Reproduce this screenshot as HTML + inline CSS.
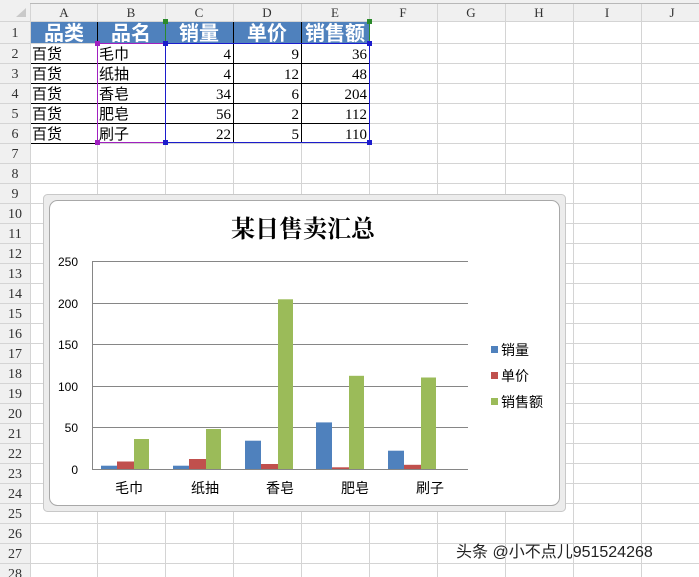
<!DOCTYPE html>
<html><head><meta charset="utf-8"><style>
body{margin:0;width:699px;height:577px;overflow:hidden;background:#fff;font-family:"Liberation Sans","Noto Sans CJK SC",sans-serif;}
svg{position:absolute;left:0;top:0}
</style></head><body>
<svg width="699" height="577" xmlns="http://www.w3.org/2000/svg" font-family="'Liberation Serif','Noto Serif CJK SC','Noto Sans CJK SC',serif">
<rect x="0" y="0" width="699" height="577" fill="#fff"/>
<rect x="0" y="0" width="699" height="21" fill="#f0f0f0"/>
<line x1="0" y1="3.5" x2="699" y2="3.5" stroke="#b8b8b8"/>
<rect x="0" y="0" width="30" height="577" fill="#f0f0f0"/>
<polygon points="16,17 26,17 26,8" fill="#c9c9c9"/>
<g stroke="#d4d4d4" stroke-width="1">
<line x1="0" y1="21.5" x2="699" y2="21.5"/>
<line x1="0" y1="43.5" x2="699" y2="43.5"/>
<line x1="0" y1="63.5" x2="699" y2="63.5"/><line x1="0" y1="83.5" x2="699" y2="83.5"/>
<line x1="0" y1="103.5" x2="699" y2="103.5"/><line x1="0" y1="123.5" x2="699" y2="123.5"/>
<line x1="0" y1="143.5" x2="699" y2="143.5"/><line x1="0" y1="163.5" x2="699" y2="163.5"/>
<line x1="0" y1="183.5" x2="699" y2="183.5"/><line x1="0" y1="203.5" x2="699" y2="203.5"/>
<line x1="0" y1="223.5" x2="699" y2="223.5"/><line x1="0" y1="243.5" x2="699" y2="243.5"/>
<line x1="0" y1="263.5" x2="699" y2="263.5"/><line x1="0" y1="283.5" x2="699" y2="283.5"/>
<line x1="0" y1="303.5" x2="699" y2="303.5"/><line x1="0" y1="323.5" x2="699" y2="323.5"/>
<line x1="0" y1="343.5" x2="699" y2="343.5"/><line x1="0" y1="363.5" x2="699" y2="363.5"/>
<line x1="0" y1="383.5" x2="699" y2="383.5"/><line x1="0" y1="403.5" x2="699" y2="403.5"/>
<line x1="0" y1="423.5" x2="699" y2="423.5"/><line x1="0" y1="443.5" x2="699" y2="443.5"/>
<line x1="0" y1="463.5" x2="699" y2="463.5"/><line x1="0" y1="483.5" x2="699" y2="483.5"/>
<line x1="0" y1="503.5" x2="699" y2="503.5"/><line x1="0" y1="523.5" x2="699" y2="523.5"/>
<line x1="0" y1="543.5" x2="699" y2="543.5"/><line x1="0" y1="563.5" x2="699" y2="563.5"/>
<line x1="30.5" y1="4" x2="30.5" y2="577"/><line x1="97.5" y1="4" x2="97.5" y2="577"/>
<line x1="165.5" y1="4" x2="165.5" y2="577"/><line x1="233.5" y1="4" x2="233.5" y2="577"/>
<line x1="301.5" y1="4" x2="301.5" y2="577"/><line x1="369.5" y1="4" x2="369.5" y2="577"/>
<line x1="437.5" y1="4" x2="437.5" y2="577"/><line x1="505.5" y1="4" x2="505.5" y2="577"/>
<line x1="573.5" y1="4" x2="573.5" y2="577"/><line x1="641.5" y1="4" x2="641.5" y2="577"/>
</g>
<g font-size="13" fill="#333" text-anchor="middle">
<text x="64" y="17">A</text><text x="131" y="17">B</text><text x="199" y="17">C</text><text x="267" y="17">D</text><text x="335" y="17">E</text><text x="403" y="17">F</text><text x="471" y="17">G</text><text x="539" y="17">H</text><text x="607" y="17">I</text><text x="672" y="17">J</text>
</g>
<g font-size="14" fill="#333" text-anchor="middle">
<text x="15" y="37">1</text><text x="15" y="58">2</text><text x="15" y="78">3</text><text x="15" y="98">4</text><text x="15" y="118">5</text><text x="15" y="138">6</text><text x="15" y="158">7</text><text x="15" y="178">8</text><text x="15" y="198">9</text><text x="15" y="218">10</text><text x="15" y="238">11</text><text x="15" y="258">12</text><text x="15" y="278">13</text><text x="15" y="298">14</text><text x="15" y="318">15</text><text x="15" y="338">16</text><text x="15" y="358">17</text><text x="15" y="378">18</text><text x="15" y="398">19</text><text x="15" y="418">20</text><text x="15" y="438">21</text><text x="15" y="458">22</text><text x="15" y="478">23</text><text x="15" y="498">24</text><text x="15" y="518">25</text><text x="15" y="538">26</text><text x="15" y="558">27</text><text x="15" y="578">28</text>
</g>
<rect x="31" y="22" width="338" height="21" fill="#4f81bd"/>
<g stroke="#000" stroke-width="1">
<line x1="97.5" y1="22" x2="97.5" y2="143"/><line x1="233.5" y1="22" x2="233.5" y2="143"/><line x1="301.5" y1="22" x2="301.5" y2="143"/>
<line x1="31" y1="63.5" x2="369" y2="63.5"/><line x1="31" y1="83.5" x2="369" y2="83.5"/><line x1="31" y1="103.5" x2="369" y2="103.5"/><line x1="31" y1="123.5" x2="369" y2="123.5"/><line x1="31" y1="143.5" x2="97" y2="143.5"/>
</g>
<g font-family="'Noto Sans CJK SC',sans-serif" font-size="20" font-weight="bold" fill="#fff" text-anchor="middle">
<text x="64" y="40">品类</text><text x="131" y="40">品名</text><text x="199" y="40">销量</text><text x="267" y="40">单价</text><text x="335" y="40">销售额</text>
</g>
<line x1="165.5" y1="22" x2="165.5" y2="43" stroke="#2b8a2b"/><line x1="369.5" y1="22" x2="369.5" y2="43" stroke="#2b8a2b"/>
<rect x="97.5" y="43.5" width="68" height="99" fill="none" stroke="#a020c0"/>
<rect x="165.5" y="43.5" width="204" height="99" fill="none" stroke="#1c1ccc"/>
<g fill="#1c1ccc"><rect x="163" y="41" width="5" height="5"/><rect x="367" y="41" width="5" height="5"/><rect x="163" y="140" width="5" height="5"/><rect x="367" y="140" width="5" height="5"/></g>
<g fill="#a020c0"><rect x="95" y="41" width="5" height="5"/><rect x="95" y="140" width="5" height="5"/></g>
<g fill="#2b8a2b"><rect x="163" y="19" width="5" height="5"/><rect x="367" y="19" width="5" height="5"/></g>
<g font-family="'Noto Sans CJK SC',sans-serif" font-size="15" fill="#000">
<text x="32" y="59">百货</text><text x="32" y="79">百货</text><text x="32" y="99">百货</text><text x="32" y="119">百货</text><text x="32" y="139">百货</text>
<text x="99" y="59">毛巾</text><text x="99" y="79">纸抽</text><text x="99" y="99">香皂</text><text x="99" y="119">肥皂</text><text x="99" y="139">刷子</text>
</g>
<g font-size="15" fill="#000" text-anchor="end">
<text x="231" y="59">4</text><text x="231" y="79">4</text><text x="231" y="99">34</text><text x="231" y="119">56</text><text x="231" y="139">22</text>
<text x="299" y="59">9</text><text x="299" y="79">12</text><text x="299" y="99">6</text><text x="299" y="119">2</text><text x="299" y="139">5</text>
<text x="367" y="59">36</text><text x="367" y="79">48</text><text x="367" y="99">204</text><text x="367" y="119">112</text><text x="367" y="139">110</text>
</g>
<rect x="43.5" y="194.5" width="522" height="317" rx="4" fill="#ececec" stroke="#c8c8c8"/>
<rect x="49.5" y="200.5" width="510" height="305" rx="8" fill="#fff" stroke="#a8a8a8"/>
<text x="303" y="237" text-anchor="middle" font-size="24" font-weight="bold" fill="#000">某日售卖汇总</text>
<g stroke="#868686" stroke-width="1">
<line x1="92" y1="261.5" x2="468" y2="261.5"/><line x1="92" y1="303.5" x2="468" y2="303.5"/><line x1="92" y1="344.5" x2="468" y2="344.5"/><line x1="92" y1="386.5" x2="468" y2="386.5"/><line x1="92" y1="427.5" x2="468" y2="427.5"/><line x1="92" y1="469.5" x2="468" y2="469.5"/>
<line x1="92.5" y1="261" x2="92.5" y2="469"/>
</g>
<g font-family="'Liberation Sans',sans-serif" font-size="12" fill="#000" text-anchor="end">
<text x="78" y="266">250</text><text x="78" y="308">200</text><text x="78" y="349">150</text><text x="78" y="391">100</text><text x="78" y="432">50</text><text x="78" y="474">0</text>
</g>
<g fill="#4f81bd">
<rect x="101" y="465.7" width="16" height="3.3"/><rect x="173" y="465.7" width="16" height="3.3"/><rect x="245" y="440.7" width="16" height="28.3"/><rect x="316" y="422.4" width="16" height="46.6"/><rect x="388" y="450.7" width="16" height="18.3"/>
</g>
<g fill="#c0504d">
<rect x="117" y="461.5" width="17" height="7.5"/><rect x="189" y="459" width="17" height="10"/><rect x="261" y="464" width="17" height="5"/><rect x="332" y="467.3" width="17" height="1.7"/><rect x="404" y="464.8" width="17" height="4.2"/>
</g>
<g fill="#9bbb59">
<rect x="134" y="439" width="15" height="30"/><rect x="206" y="429" width="15" height="40"/><rect x="278" y="299.3" width="15" height="169.7"/><rect x="349" y="375.8" width="15" height="93.2"/><rect x="421" y="377.5" width="15" height="91.5"/>
</g>
<g font-family="'Noto Sans CJK SC',sans-serif" font-size="14" fill="#000" text-anchor="middle">
<text x="129" y="493">毛巾</text><text x="205" y="493">纸抽</text><text x="280" y="493">香皂</text><text x="355" y="493">肥皂</text><text x="430" y="493">刷子</text>
</g>
<rect x="491" y="346" width="7" height="7" fill="#4f81bd"/><rect x="491" y="372" width="7" height="7" fill="#c0504d"/><rect x="491" y="398" width="7" height="7" fill="#9bbb59"/>
<g font-family="'Noto Sans CJK SC',sans-serif" font-size="14" fill="#000">
<text x="501" y="355">销量</text><text x="501" y="381">单价</text><text x="501" y="407">销售额</text>
</g>
<text x="456" y="557" font-family="'Liberation Sans','Noto Sans CJK SC',sans-serif" font-size="16" fill="#222">头条 @小不点儿951524268</text>
</svg>
</body></html>
